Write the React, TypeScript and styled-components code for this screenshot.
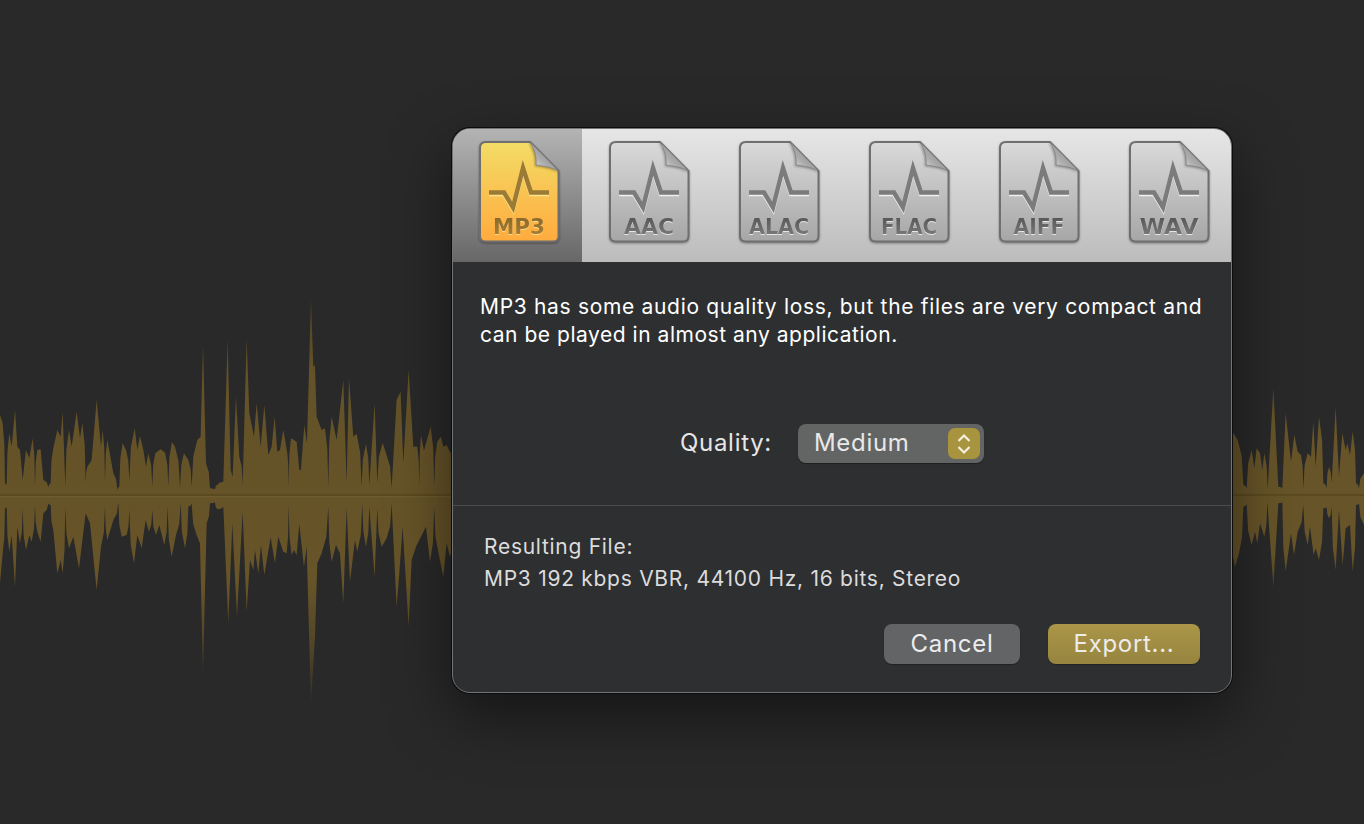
import styled, { createGlobalStyle } from 'styled-components';

const GlobalStyle = createGlobalStyle`
  html, body {
    margin: 0;
    padding: 0;
    height: 100%;
    background: #292929;
    overflow: hidden;
  }
`;

// traced from the picture, 3x crop coordinates
const leftTop = '0,375 8,400 15,580 20,585 28,430 35,470 45,360 52,470 60,480 68,570 78,480 88,505 98,445 105,590 112,480 122,478 130,570 145,592 152,580 160,475 172,420 182,440 188,365 196,590 207,420 215,470 230,365 240,445 247,400 257,580 262,530 275,510 290,330 303,470 308,420 315,575 322,450 340,550 352,600 358,590 368,460 378,480 388,575 404,415 412,480 420,438 430,480 438,530 445,490 457,590 466,490 482,478 495,488 505,590 516,456 525,470 540,595 552,490 565,510 575,590 592,450 602,440 609,165 618,520 630,595 645,598 655,582 670,575 683,150 692,540 698,560 708,320 718,500 728,585 740,145 748,370 762,440 770,340 782,470 793,345 805,495 815,470 824,380 832,485 840,480 850,420 862,490 866,590 873,445 890,455 898,540 903,540 913,405 921,460 933,30 940,230 945,225 950,380 965,420 975,415 985,590 995,380 1010,450 1030,270 1040,580 1047,265 1060,440 1070,432 1085,590 1098,462 1108,585 1124,340 1132,580 1148,458 1160,495 1175,595 1190,330 1202,305 1210,520 1226,240 1240,470 1252,470 1258,590 1263,435 1272,482 1292,410 1303,590 1312,455 1323,440 1330,470 1340,465 1352,490 1380,490';
const leftBottom = '0,880 8,790 15,655 20,650 28,785 35,735 45,890 52,710 60,760 68,655 78,780 88,735 95,755 105,645 112,725 122,755 130,670 145,640 152,645 160,720 172,850 182,810 188,850 196,650 207,775 220,740 237,835 257,670 270,700 290,900 303,770 315,650 322,750 340,690 355,637 365,740 380,735 388,660 402,820 412,735 425,775 437,690 447,725 457,660 468,735 478,705 493,765 503,650 515,800 528,735 542,640 555,775 565,650 575,640 590,735 600,760 609,1150 620,700 630,640 645,637 652,658 670,650 685,1000 697,700 711,980 728,665 740,965 750,810 760,840 765,780 775,850 783,765 793,855 812,742 825,820 835,740 850,785 860,790 866,645 875,795 882,780 890,795 898,702 912,830 920,770 933,1240 945,1040 952,820 965,790 985,650 995,815 1008,765 1020,790 1030,940 1040,655 1050,875 1065,750 1072,785 1087,640 1098,770 1108,650 1124,860 1132,655 1145,770 1160,745 1175,640 1190,950 1198,850 1208,710 1226,1010 1235,810 1248,770 1278,710 1290,815 1303,650 1315,785 1330,860 1340,760 1350,800 1380,700';
const rightTop = '20,182 38,210 55,345 65,355 80,240 88,295 95,235 105,250 112,300 118,250 128,358 145,55 160,350 172,355 182,130 198,275 208,195 218,245 228,255 235,355 248,250 258,260 265,155 272,290 282,140 295,340 305,355 312,290 320,340 332,112 342,320 352,190 362,240 367,220 375,255 383,185 393,340 402,355 417,310';
const rightBottom = '20,540 30,590 42,550 55,410 65,403 80,525 90,485 97,520 105,460 118,500 127,395 145,650 160,400 172,397 182,605 198,490 207,555 218,485 235,405 248,525 255,470 266,555 272,535 282,570 295,415 305,412 312,445 320,410 332,600 342,420 353,585 362,475 375,465 383,605 393,405 402,400 417,465';

// the walls next to a valley are steep, so bulge them outwards from the centre line
const rounded = (line: string, center: number) => {
  const pts = line.split(' ').map((p) => p.split(',').map(Number));
  const out: string[] = [];
  pts.forEach((b, i) => {
    const a = pts[i - 1];
    if (a) {
      const da = Math.abs(a[1] - center);
      const db = Math.abs(b[1] - center);
      const [hi, lo, hiD, loD] = da > db ? [a, b, da, db] : [b, a, db, da];
      if (loD < 45 && hiD < 240) {
        out.push(`${hi[0] + (lo[0] - hi[0]) * 0.7},${hi[1] + (lo[1] - hi[1]) * 0.35}`);
      }
    }
    out.push(b.join(','));
  });
  return out;
};

const outline = (top: string, bottom: string, center: number) =>
  [...rounded(top, center), ...rounded(bottom, center).reverse()].join(' ');

const formats = [
  { name: 'MP3', width: 52 },
  { name: 'AAC', width: 50 },
  { name: 'ALAC', width: 60 },
  { name: 'FLAC', width: 56 },
  { name: 'AIFF', width: 51 },
  { name: 'WAV', width: 59 },
];

const Page = styled.div`
  position: relative;
  width: 1364px;
  height: 824px;
  padding: 128px 0 0 452px;
  box-sizing: border-box;
  background: #292929;
  font-family: Inter, 'Liberation Sans', sans-serif;
`;

const Wave = styled.svg`
  position: absolute;
  left: 0;
  top: 0;
`;

const Dialog = styled.div`
  position: relative;
  display: flex;
  flex-direction: column;
  width: 780px;
  height: 565px;
  box-sizing: border-box;
  background: #2e2f31;
  border: 1px solid #737476;
  border-radius: 18px;
  overflow: hidden;
  box-shadow: 0 0 0 1px #0c0c0c, 0 22px 60px rgba(0, 0, 0, 0.5);
`;

const FormatBar = styled.div`
  display: flex;
  flex: none;
  height: 133px;
  background: linear-gradient(#e6e6e6, #bcbcbc);
`;

const FormatCell = styled.div<{ $active?: boolean }>`
  display: flex;
  box-sizing: border-box;
  flex: none;
  width: ${(p) => (p.$active ? 129 : 130)}px;
  padding: 6px 0 0 ${(p) => (p.$active ? 17 : 18)}px;
  background: ${(p) => (p.$active ? 'linear-gradient(#b4b4b4, #676767)' : 'none')};
`;

const Description = styled.p`
  margin: 31px 27px 0;
  color: #fff;
  font-size: 21px;
  line-height: 28px;
  letter-spacing: 0.68px;
  white-space: nowrap;
`;

const TightLine = styled.span`
  letter-spacing: 0.53px;
`;

const QualityRow = styled.div`
  display: flex;
  align-items: center;
  gap: 26px;
  height: 39px;
  margin-top: 75px;
  padding-left: 227px;
  font-size: 24px;
  letter-spacing: 0.7px;
`;

const QualityLabel = styled.span`
  color: #e6e6e6;
  padding-bottom: 2px;
`;

const Select = styled.div`
  display: flex;
  align-items: center;
  justify-content: space-between;
  box-sizing: border-box;
  width: 186px;
  height: 39px;
  padding: 0 4px 2px 16px;
  border-radius: 8px;
  background: #636565;
  box-shadow: 0 1px 1px rgba(0, 0, 0, 0.35);
  color: #e8e8e8;
`;

const Stepper = styled.div`
  display: flex;
  align-items: center;
  justify-content: center;
  width: 32px;
  height: 31px;
  margin-bottom: -2px;
  border-radius: 7px;
  background: #a8933f;
`;

const Divider = styled.div`
  height: 1px;
  margin-top: 42px;
  background: #4a4b4d;
`;

const ResultBlock = styled.div`
  margin: 25px 0 0 31px;
  color: #dcdcdc;
  font-size: 21px;
  line-height: 32px;
  letter-spacing: 0.72px;
`;

const Buttons = styled.div`
  display: flex;
  justify-content: flex-end;
  gap: 28px;
  margin: 29px 31px 0 0;
`;

const Button = styled.div<{ $primary?: boolean; $width: number }>`
  display: flex;
  align-items: center;
  justify-content: center;
  box-sizing: border-box;
  width: ${(p) => p.$width}px;
  height: 40px;
  padding-bottom: 2px;
  border-radius: 8px;
  background: ${(p) => (p.$primary ? 'linear-gradient(#ab9648, #96843f)' : '#636466')};
  box-shadow: 0 1px 1px rgba(0, 0, 0, 0.3);
  color: #ececec;
  font-size: 24px;
  letter-spacing: 0.7px;
`;

function FileIcon({ name, width, active }: { name: string; width: number; active: boolean }) {
  const id = name;
  return (
    <svg width="100" height="115" viewBox="0 0 100 115">
      <defs>
        <linearGradient id={`body${id}`} x1="0" y1="0" x2="0" y2="1">
          <stop offset="0" stopColor={active ? '#f3dc66' : '#dadada'} />
          <stop offset="1" stopColor={active ? '#ffab3e' : '#a6a6a6'} />
        </linearGradient>
        <linearGradient id={`fold${id}`} x1="0" y1="1" x2="1" y2="0">
          <stop offset="0" stopColor="#e6e6e6" />
          <stop offset="0.4" stopColor="#a9a9a9" />
          <stop offset="1" stopColor="#858585" />
        </linearGradient>
        <linearGradient id={`ink${id}`} x1="0" y1="0" x2="0" y2="1">
          <stop offset="0" stopColor={active ? '#84652a' : '#4f4f4f'} />
          <stop offset="1" stopColor={active ? '#ad8235' : '#808080'} />
        </linearGradient>
      </defs>
      <path
        d="M16 7 H60 L88.5 36 V101 Q88.5 106.5 83 106.5 H16 Q10 106.5 10 101 V13 Q10 7 16 7 Z"
        fill={`url(#body${id})`}
        stroke="#6f6f6f"
        strokeWidth="2"
        style={{ filter: 'drop-shadow(0 1px 1px rgba(0,0,0,.35))' }}
      />
      <path
        d="M60 7 C63 12 67 20 66 30 C72 31 82 32 88.5 36 Z"
        fill={`url(#fold${id})`}
        stroke="#808080"
        strokeWidth="0.8"
        style={{ filter: 'drop-shadow(-1px 1px 1px rgba(0,0,0,.3))' }}
      />
      <polyline
        points="19,59 34,59 43,74 53,34.5 61,59 79,59"
        fill="none"
        stroke={active ? '#ffe48f' : '#f0f0f0'}
        strokeWidth="4.4"
        strokeMiterlimit="10"
      />
      <polyline
        points="19,57.5 34,57.5 43,72.5 53,33 61,57.5 79,57.5"
        fill="none"
        stroke={active ? '#9a7a34' : '#7b7b7b'}
        strokeWidth="4.4"
        strokeMiterlimit="10"
      />
      <text
        x="49"
        y="98.5"
        textAnchor="middle"
        textLength={width}
        lengthAdjust="spacingAndGlyphs"
        fontFamily="'DejaVu Sans', sans-serif"
        fontWeight="700"
        fontSize="22"
        fill={`url(#ink${id})`}
        style={{ filter: `drop-shadow(0 1px 0 ${active ? 'rgba(255,230,150,.8)' : 'rgba(255,255,255,.7)'})` }}
      >
        {name}
      </text>
    </svg>
  );
}

export default function App() {
  return (
    <Page>
      <GlobalStyle />
      <Wave width="1364" height="824" viewBox="0 0 1364 824">
        <defs>
          <linearGradient id="fadeLeft" gradientUnits="userSpaceOnUse" x1="0" y1="0" x2="0" y2="1260">
            <stop offset="0" stopColor="#675428" stopOpacity="0.6" />
            <stop offset="0.2" stopColor="#675428" stopOpacity="0.95" />
            <stop offset="0.7" stopColor="#675428" />
            <stop offset="0.85" stopColor="#675428" stopOpacity="0.65" />
            <stop offset="1" stopColor="#675428" stopOpacity="0.1" />
          </linearGradient>
          <linearGradient id="fadeRight" gradientUnits="userSpaceOnUse" x1="0" y1="0" x2="0" y2="690">
            <stop offset="0" stopColor="#675428" stopOpacity="0.6" />
            <stop offset="0.2" stopColor="#675428" />
            <stop offset="0.8" stopColor="#675428" />
            <stop offset="1" stopColor="#675428" stopOpacity="0.5" />
          </linearGradient>
        </defs>
        <g transform="translate(0 290) scale(0.3333)">
          <polygon points={outline(leftTop, leftBottom, 617)} fill="url(#fadeLeft)" />
          <rect x="0" y="612" width="1380" height="6" fill="#5c4a20" />
          <rect x="0" y="618" width="1380" height="4" fill="#6d5c30" />
        </g>
        <g transform="translate(1225 370) scale(0.3333)">
          <polygon points={outline(rightTop, rightBottom, 375)} fill="url(#fadeRight)" />
          <rect x="0" y="372" width="417" height="6" fill="#5c4a20" />
        </g>
      </Wave>
      <Dialog>
        <FormatBar>
          {formats.map((f, i) => (
            <FormatCell key={f.name} $active={i === 0}>
              <FileIcon name={f.name} width={f.width} active={i === 0} />
            </FormatCell>
          ))}
        </FormatBar>
        <Description>
          MP3 has some audio quality loss, but the files are very compact and
          <br />
          <TightLine>can be played in almost any application.</TightLine>
        </Description>
        <QualityRow>
          <QualityLabel>Quality:</QualityLabel>
          <Select>
            Medium
            <Stepper>
              <svg width="16" height="24" viewBox="0 0 16 24" fill="none" stroke="#f2efe0" strokeWidth="2.2">
                <path d="M2.5 9 L8 3.5 L13.5 9" />
                <path d="M2.5 15 L8 20.5 L13.5 15" />
              </svg>
            </Stepper>
          </Select>
        </QualityRow>
        <Divider />
        <ResultBlock>
          Resulting File:
          <br />
          MP3 192 kbps VBR, 44100 Hz, 16 bits, Stereo
        </ResultBlock>
        <Buttons>
          <Button $width={136}>Cancel</Button>
          <Button $width={152} $primary>
            Export...
          </Button>
        </Buttons>
      </Dialog>
    </Page>
  );
}
